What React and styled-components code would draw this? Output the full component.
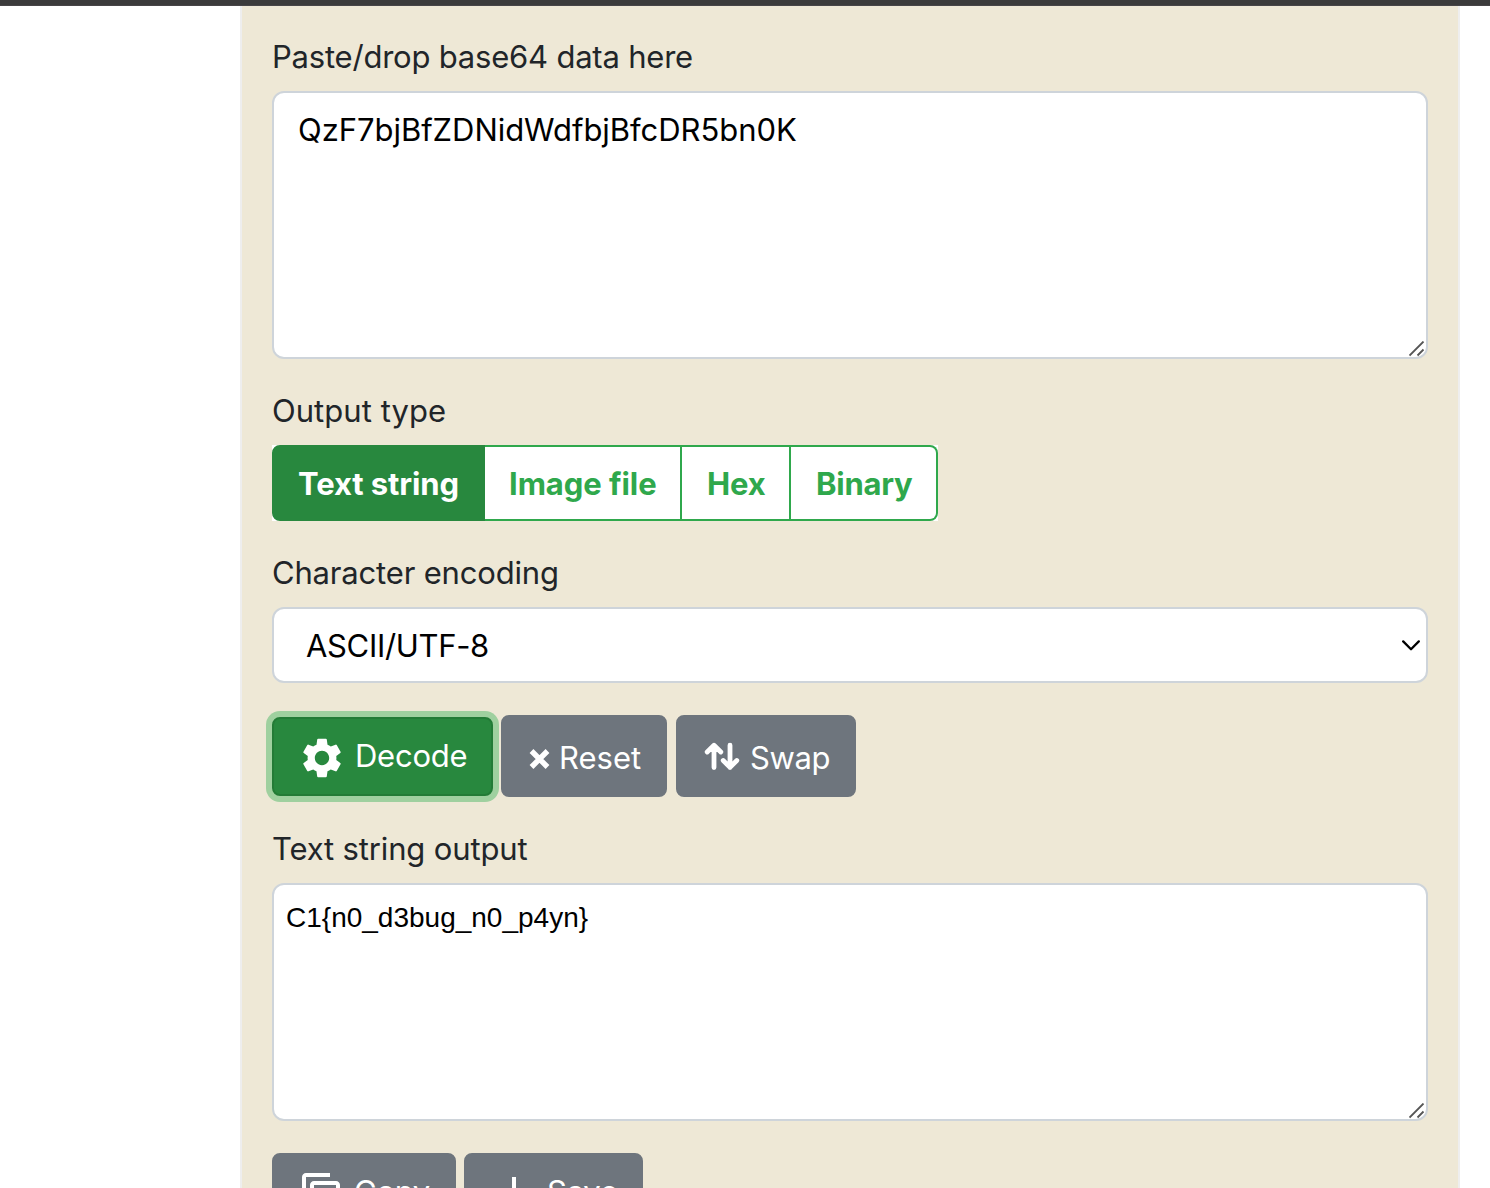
import React from 'react';
import styled, { createGlobalStyle } from 'styled-components';
import { MdSettings, MdContentCopy, MdSaveAlt } from 'react-icons/md';

const Global = createGlobalStyle`
  * { box-sizing: border-box; }
  html, body { margin: 0; height: 100%; background: #fff; overflow: hidden; }
  body { font-family: Inter, "Liberation Sans", sans-serif; font-size: 31px; color: #212529; }
`;
const Page = styled.div`
  height: 1188px;
  overflow: hidden;
  display: flex;
  flex-direction: column;
`;
const TopBar = styled.div`
  flex: none;
  height: 6px;
  background: #3b3b3b;
  border-bottom: 1px solid #474547;
`;
const Panel = styled.main`
  flex: none;
  width: 1220px;
  height: 1260px;
  margin-left: 240px;
  padding: 27px 30px 0;
  background: #eee8d6;
  border: 0 solid #eee;
  border-width: 0 2px;
`;
const Label = styled.label`
  display: block;
  height: 48px;
  line-height: 47px;
  margin-bottom: 10px;
  white-space: nowrap;
  letter-spacing: ${(p) => p.$ls || 0}px;
`;
const Field = styled.div`
  position: relative;
  height: ${(p) => p.$h}px;
  margin-bottom: ${(p) => p.$mb}px;
`;
const Area = styled.textarea`
  display: block;
  width: 100%;
  height: 100%;
  margin: 0;
  padding: ${(p) => p.$pad};
  border: 2px solid #ced4da;
  border-radius: 12px;
  background: #fff;
  color: #000;
  font: ${(p) => p.$font};
  letter-spacing: ${(p) => p.$ls}px;
  resize: none;
  outline: none;
  overflow: hidden;
`;
const Grip = styled.svg`
  position: absolute;
  right: 3px;
  bottom: 2px;
`;
const Select = styled.select`
  appearance: none;
  display: block;
  width: 100%;
  height: 100%;
  padding: 1px 32px 0;
  border: 2px solid #ced4da;
  border-radius: 12px;
  background: #fff;
  color: #000;
  font: 31px Inter, sans-serif;
  letter-spacing: ${(p) => p.$ls}px;
`;
const Chevron = styled.svg`
  position: absolute;
  right: 8px;
  top: 30px;
`;
const Group = styled.div`
  display: flex;
  width: 666px;
  height: 76px;
  margin-bottom: 28px;
  background: #fff;
`;
const Segment = styled.button`
  width: ${(p) => p.$w}px;
  padding: 1px 0 0 ${(p) => p.$pl}px;
  text-align: left;
  white-space: nowrap;
  border: 2px solid ${(p) => (p.$active ? '#28883e' : '#2fa84c')};
  border-left-width: ${(p) => (p.$active ? 2 : 0)}px;
  background: ${(p) => (p.$active ? '#28883e' : '#fff')};
  color: ${(p) => (p.$active ? '#fff' : '#2fa84c')};
  font: 700 31px Inter, sans-serif;
  letter-spacing: ${(p) => p.$ls}px;
  &:first-child { border-radius: 8px 0 0 8px; }
  &:last-child { border-radius: 0 8px 8px 0; }
`;
const Actions = styled.div`
  display: flex;
  align-items: center;
  height: 82px;
  margin-bottom: 28px;
`;
const Button = styled.button`
  display: flex;
  align-items: center;
  flex: none;
  width: ${(p) => p.$w}px;
  height: ${(p) => (p.$primary ? 79 : 82)}px;
  margin-right: ${(p) => p.$mr || 0}px;
  padding: ${(p) => p.$pt}px 0 0 ${(p) => p.$pl}px;
  gap: ${(p) => p.$gap}px;
  border: 2px solid ${(p) => (p.$primary ? '#237b36' : '#6e757d')};
  border-radius: 8px;
  background: ${(p) => (p.$primary ? '#28883e' : '#6e757d')};
  box-shadow: ${(p) => (p.$primary ? '0 0 0 6px #9fd09f' : 'none')};
  color: #fff;
  font: 31px Inter, sans-serif;
  svg { flex: none; display: block; }
`;
const Caption = styled.span`
  line-height: 48px;
  margin-bottom: ${(p) => p.$up || 0}px;
  white-space: nowrap;
  letter-spacing: ${(p) => p.$ls}px;
`;

const ResizeGrip = () => (
  <Grip width="16" height="16" viewBox="0 0 16 16" stroke="#555" strokeWidth="1.8" fill="none">
    <path d="M0.5 14.5L14.5 0.5M8.5 14.5L14.5 8.5" />
  </Grip>
);

export default function App() {
  return (
    <Page>
      <Global />
      <TopBar />
      <Panel>
        <Label $ls={-0.21}>Paste/drop base64 data here</Label>
        <Field $h={268} $mb={28}>
          <Area $pad="13px 24px" $font="31px/48px Inter, sans-serif" $ls={-0.04} defaultValue="QzF7bjBfZDNidWdfbjBfcDR5bn0K" spellCheck={false} />
          <ResizeGrip />
        </Field>
        <Label $ls={0.04}>Output type</Label>
        <Group>
          <Segment $active $w={213} $pl={24} $ls={-0.1}>Text string</Segment>
          <Segment $w={197} $pl={24} $ls={-0.07}>Image file</Segment>
          <Segment $w={109} $pl={25} $ls={-0.1}>Hex</Segment>
          <Segment $w={147} $pl={25} $ls={-0.25}>Binary</Segment>
        </Group>
        <Label $ls={-0.18}>Character encoding</Label>
        <Field $h={76} $mb={32}>
          <Select $ls={-0.33}><option>ASCII/UTF-8</option></Select>
          <Chevron width="20" height="16" viewBox="0 0 20 16" fill="none" stroke="#000" strokeWidth="2.3" strokeLinecap="round" strokeLinejoin="round">
            <path d="M3.2 4.4L11 12.2L18.8 4.4" />
          </Chevron>
        </Field>
        <Actions>
          <Button $primary $w={221} $pl={24} $pt={3} $gap={9} $mr={8}>
            <MdSettings size={48} /><Caption $ls={-0.25} $up={3}>Decode</Caption>
          </Button>
          <Button $w={166} $pl={26} $pt={5} $gap={9} $mr={9}>
            <svg width="21" height="20" viewBox="0 0 21 20" stroke="#fff" strokeWidth="5.4" fill="none"><path d="M2.5 2L18.5 18M18.5 2L2.5 18" /></svg>
            <Caption $up={2}>Reset</Caption>
          </Button>
          <Button $w={180} $pl={26} $pt={5} $gap={10}>
            <svg width="36" height="34" viewBox="0 0 36 34" stroke="#fff" strokeWidth="4.8" fill="none" strokeLinecap="round" strokeLinejoin="round"><path d="M10 25.5V3.5M3.2 10L10 3.2L16.8 10M26 3.2V25.5M19.2 18.5L26 25.3L32.8 18.5" /></svg>
            <Caption $ls={-0.4} $up={2}>Swap</Caption>
          </Button>
        </Actions>
        <Label $ls={-0.15}>Text string output</Label>
        <Field $h={238} $mb={32}>
          <Area $pad="12px" $font='28px/42px "Liberation Sans", Arial, sans-serif' $ls={0} defaultValue="C1{n0_d3bug_n0_p4yn}" spellCheck={false} />
          <ResizeGrip />
        </Field>
        <Actions>
          <Button $w={184} $pl={24} $pt={2} $gap={8} $mr={8}>
            <MdContentCopy size={48} /><Caption $ls={-0.25} $up={7}>Copy</Caption>
          </Button>
          <Button $w={179} $pl={24} $pt={2} $gap={9}>
            <MdSaveAlt size={48} /><Caption $ls={-0.25} $up={7}>Save</Caption>
          </Button>
        </Actions>
      </Panel>
    </Page>
  );
}
